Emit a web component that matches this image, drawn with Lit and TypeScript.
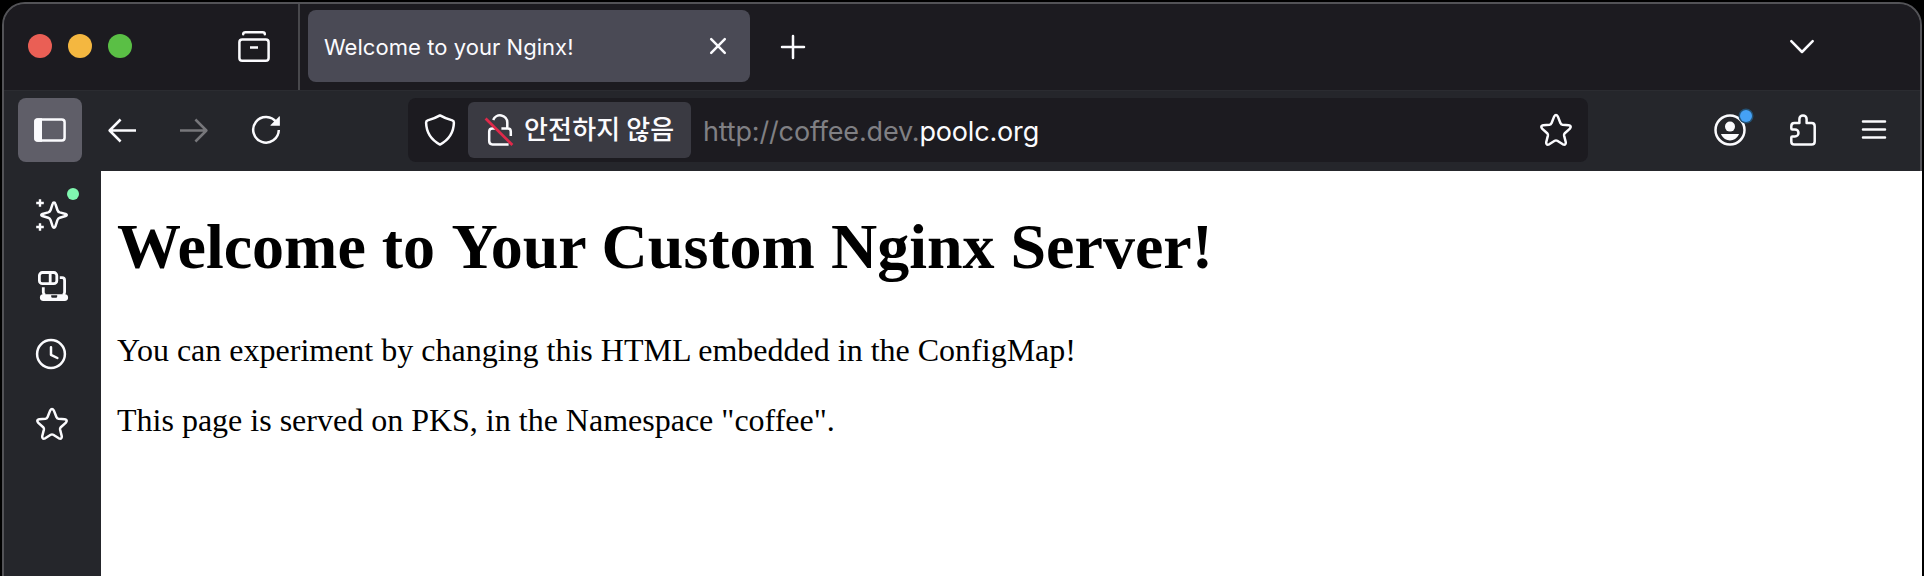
import { LitElement, html, svg, css } from "lit";
import { customElement, property } from "lit/decorators.js";

const STAR = svg`<path d="M14.1 2.6 Q16 -0.4 17.9 2.6 L20.5 9.2 Q21 10.6 22.5 10.8 L28.8 11.3 Q32 12 29.9 14.6 L24.8 19.2 Q23.8 20.2 24.1 21.6 L25.8 28.2 Q26 31.6 22.8 30.3 L17.3 26.8 Q16 26 14.7 26.8 L9.2 30.3 Q6 31.6 6.2 28.2 L7.9 21.6 Q8.2 20.2 7.2 19.2 L2.1 14.6 Q0 12 3.2 11.3 L9.5 10.8 Q11 10.6 11.5 9.2 Z"/>`;

const ICONS: Record<string, unknown> = {
  archive: svg`<path d="M5.2 4.2 V4 Q5.2 2.2 7.4 2.2 H24.6 Q26.8 2.2 26.8 4 V4.2"/><rect x="1.4" y="9.4" width="29.2" height="21.4" rx="2.8"/><path class="butt" d="M12 17.5 H20"/>`,
  close: svg`<path d="M9.2 9.2 L22.8 22.8 M22.8 9.2 L9.2 22.8"/>`,
  plus: svg`<path d="M5 16 H27 M16 5 V27"/>`,
  chevron: svg`<path d="M5.3 10.2 L16 21 L26.7 10.2"/>`,
  sidebar: svg`<rect x="1.4" y="5.4" width="29.2" height="21.2" rx="2.8"/><path class="solid" d="M3.5 4.2 H8 V27.8 H3.5 Q.2 27.8 .2 24.5 V7.5 Q.2 4.2 3.5 4.2Z"/>`,
  back: svg`<path class="butt" d="M30 16.5 H3.8 M14.6 5.5 L3.6 16.5 L14.6 27.5"/>`,
  forward: svg`<path class="butt" d="M2 16.5 H28.2 M17.4 5.5 L28.4 16.5 L17.4 27.5"/>`,
  reload: svg`<path class="butt" d="M26.6 8.6 A12.8 12.8 0 1 0 28.8 16"/><path class="solid" d="M29.9 2.6 V11.8 H20.8 Q20.1 11.6 20.6 10.9 L29.2 2.4 Q29.9 2 29.9 2.6Z"/>`,
  shield: svg`<path d="M16 1.4 Q21 4.4 28.3 6.4 Q30 7 29.9 8.8 Q29.5 23.4 16 30.6 Q2.5 23.4 2.1 8.8 Q2 7 3.7 6.4 Q11 4.4 16 1.4Z"/>`,
  lock: svg`<path class="butt" d="M9.2 6 A7.3 7.3 0 0 1 23.3 8.5 V14.5 H24 Q26.8 14.5 26.8 17.5 V22 M11 14.5 H8.5 Q5.2 14.5 5.2 17.5 V27 Q5.2 30.4 8.4 30.4 H24.6 M17.4 14.5 H24"/><path class="strike" d="M1.6 4.6 L28.4 31"/>`,
  star: STAR,
  account: svg`<circle cx="16" cy="16" r="14.5"/><circle class="solid" cx="16" cy="12.6" r="5"/><path class="solid" d="M7.5 20 H24.5 Q25.3 20 24.8 20.8 Q21.8 26.4 16 26.4 Q10.2 26.4 7.2 20.8 Q6.7 20 7.5 20Z"/>`,
  puzzle: svg`<path d="M13.4 9.1 V5 A3.6 3.6 0 0 1 20.6 5 V9.1 H25.6 Q28.7 9.1 28.7 12.2 V27.5 Q28.7 30.6 25.6 30.6 H8.4 Q5.3 30.6 5.3 27.5 V23.4 Q5.3 22.4 6.3 22.4 H9 A3.5 3.5 0 0 0 9 15.4 H6.3 Q5.3 15.4 5.3 14.4 V12.2 Q5.3 9.1 8.4 9.1Z"/>`,
  menu: svg`<path d="M5 7.4 H27 M5 15.4 H27 M5 23.4 H27"/>`,
  sparkle: svg`<path d="M18 3.4 Q19 3.4 19.4 4.8 L21.4 11 Q22 12.8 23.8 13.4 L29.6 15 Q32 16 29.6 17 L23.8 18.8 Q22 19.4 21.4 21.2 L19.4 27.4 Q18 30 16.6 27.4 L14.6 21.2 Q14 19.4 12.2 18.8 L6.4 17 Q4 16 6.4 15 L12.2 13.4 Q14 12.8 14.6 11 L16.6 4.8 Q17 3.4 18 3.4Z"/><path class="butt fine" d="M4 .2 V7.8 M.2 4 H7.8 M4 24.2 V31.8 M.2 28 H7.8"/>`,
  devices: svg`<rect class="bold" x="3.4" y="3.5" width="17.4" height="11.2" rx="3"/><path class="butt bold" d="M14.2 3.5 V14.7 M23.8 8.6 H26 Q28.6 8.6 28.6 11.4 V23.2 Q28.6 25 27 26 M9 26 Q7.3 25 7.3 23.2 V18.2"/><path class="solid" fill-rule="evenodd" d="M7.3 25.2 H28.7 A3.4 3.4 0 0 1 28.7 32 H7.3 A3.4 3.4 0 0 1 7.3 25.2Z M15.2 26.3 V27.6 Q15.2 28.8 16.4 28.8 H20 Q21.2 28.8 21.2 27.6 V26.3Z"/>`,
  clock: svg`<circle cx="16" cy="16" r="13.9"/><path d="M16 9.2 V16.8 L22.4 20"/>`,
};

@customElement("ui-icon")
class UiIcon extends LitElement {
  @property() name = "";
  static styles = css`
    :host { display: block; width: 32px; height: 32px; flex: none; }
    svg {
      display: block; overflow: visible; fill: none; stroke: currentColor;
      stroke-width: 2.5; stroke-linecap: round; stroke-linejoin: round;
    }
    .butt { stroke-linecap: butt; }
    .bold { stroke-width: 2.8; }
    .solid { fill: currentColor; stroke: none; }
    .strike { stroke: #e0294a; stroke-width: 2.8; stroke-linecap: butt; }
    .fine { stroke-width: 2.4; }
  `;
  render() {
    return html`<svg width="32" height="32" viewBox="0 0 32 32">${ICONS[this.name]}</svg>`;
  }
}

@customElement("app-root")
class AppRoot extends LitElement {
  static styles = css`
    :host {
      display: block; width: 100vw; height: 576px; overflow: hidden;
      background: #000; color: #fbfbfe; box-sizing: border-box;
      padding: 2px 2px 0 2px; font-family: Inter, "Noto Sans CJK KR", sans-serif;
    }
    * { box-sizing: border-box; }
    .window {
      height: 600px; border: 2px solid #535357; border-radius: 23px 23px 0 0;
      background: #25262b; display: flex; flex-direction: column;
    }
    .tabs { height: 86px; flex: none; background: #1c1b20; border-radius: 21px 21px 0 0; display: flex; align-items: center; }
    .lights { display: flex; gap: 16px; margin: 0 0 2px 24px; }
    .light { width: 24px; height: 24px; border-radius: 50%; }
    .red { background: #ea5f55; }
    .yellow { background: #f4b740; }
    .green { background: #5abf45; }
    .archive { margin: 0 0 2px 106px; }
    .divider { width: 2px; height: 86px; margin-left: 28px; background: #48484c; }
    .tab {
      width: 442px; height: 72px; margin: 0 0 2px 8px; border-radius: 8px; background: #4a4a55;
      padding: 0 16px 0 16px; display: flex; align-items: center; justify-content: space-between;
    }
    .title { font-size: 22px; font-weight: 400; letter-spacing: .05px; white-space: nowrap; padding-top: 2px; }
    .plus { margin-left: 27px; }
    .more { margin-left: auto; margin-right: 102px; }
    .toolbar {
      height: 81px; flex: none; display: flex; align-items: center; gap: 8px;
      padding: 0 14px 2px; border-top: 1px solid #2b2c31;
    }
    .btn {
      width: 64px; height: 64px; flex: none; border-radius: 8px; position: relative;
      display: flex; align-items: center; justify-content: center;
    }
    .on { background: #5f5e68; }
    .off { color: #77777b; }
    .address {
      width: 1180px; height: 64px; margin: 0 auto 0 102px; border-radius: 8px; background: #1c1b20;
      display: flex; align-items: center; padding: 0 16px;
    }
    .chip {
      width: 223px; height: 56px; margin-left: 12px; border-radius: 6px; background: #3a3a42;
      display: flex; align-items: center; padding-left: 16px; gap: 8px;
    }
    .warn {
      font-family: "Noto Sans CJK KR", sans-serif; font-size: 26px; font-weight: 500; letter-spacing: .15px;
      line-height: 36px; white-space: nowrap; padding-bottom: 4px;
    }
    .url { margin-left: 12px; font-size: 27px; letter-spacing: -.16px; font-weight: 420; white-space: nowrap; color: #808084; padding-top: 2px; }
    .host { color: #fbfbfe; }
    .bookmark { margin-left: auto; }
    .badge {
      position: absolute; left: 42px; top: 12px; width: 12px; height: 12px; border-radius: 50%;
      background: #45a1f5; box-shadow: 0 0 0 1.5px #245174;
    }
    .body { flex: 1; display: flex; min-height: 0; }
    .side { width: 97px; flex: none; display: flex; flex-direction: column; align-items: flex-start; padding: 28px 0 0 32px; gap: 38px; }
    .item { position: relative; }
    .dot { position: absolute; left: 31px; top: -11px; width: 12px; height: 12px; border-radius: 50%; background: #80f7b0; }
    .clock { margin: -1px 0 0 -1px; }
    .page { flex: 1; background: #fff; color: #000; padding: 16px; margin-right: -2px; font-family: "Liberation Serif", serif; }
    .heading { margin: 23px 0 0; font-size: 64px; line-height: 74px; font-weight: 700; white-space: nowrap; }
    .rest { margin-left: .5px; }
    .para { margin: 33px 0 0; font-size: 32px; line-height: 37px; white-space: nowrap; }
    .first { margin-top: 48px; }
  `;

  render() {
    return html`
      <div class="window">
        <div class="tabs">
          <div class="lights">
            <div class="light red"></div><div class="light yellow"></div><div class="light green"></div>
          </div>
          <ui-icon class="archive" name="archive"></ui-icon>
          <div class="divider"></div>
          <div class="tab">
            <span class="title">Welcome to your Nginx!</span>
            <ui-icon name="close"></ui-icon>
          </div>
          <ui-icon class="plus" name="plus"></ui-icon>
          <ui-icon class="more" name="chevron"></ui-icon>
        </div>
        <div class="toolbar">
          <div class="btn on"><ui-icon name="sidebar"></ui-icon></div>
          <div class="btn"><ui-icon name="back"></ui-icon></div>
          <div class="btn off"><ui-icon name="forward"></ui-icon></div>
          <div class="btn"><ui-icon name="reload"></ui-icon></div>
          <div class="address">
            <ui-icon name="shield"></ui-icon>
            <div class="chip"><ui-icon name="lock"></ui-icon><span class="warn">안전하지 않음</span></div>
            <div class="url">http://coffee.dev.<span class="host">poolc.org</span></div>
            <ui-icon class="bookmark" name="star"></ui-icon>
          </div>
          <div class="btn"><ui-icon name="account"></ui-icon><div class="badge"></div></div>
          <div class="btn"><ui-icon name="puzzle"></ui-icon></div>
          <div class="btn"><ui-icon name="menu"></ui-icon></div>
        </div>
        <div class="body">
          <div class="side">
            <div class="item"><ui-icon name="sparkle"></ui-icon><div class="dot"></div></div>
            <ui-icon name="devices"></ui-icon>
            <ui-icon class="clock" name="clock"></ui-icon>
            <ui-icon name="star"></ui-icon>
          </div>
          <div class="page">
            <h1 class="heading">Welcome to <span class="rest">Your Custom Nginx Server!</span></h1>
            <p class="para first">You can experiment by changing this HTML embedded in the ConfigMap!</p>
            <p class="para">This page is served on PKS, in the Namespace "coffee".</p>
          </div>
        </div>
      </div>
    `;
  }
}
